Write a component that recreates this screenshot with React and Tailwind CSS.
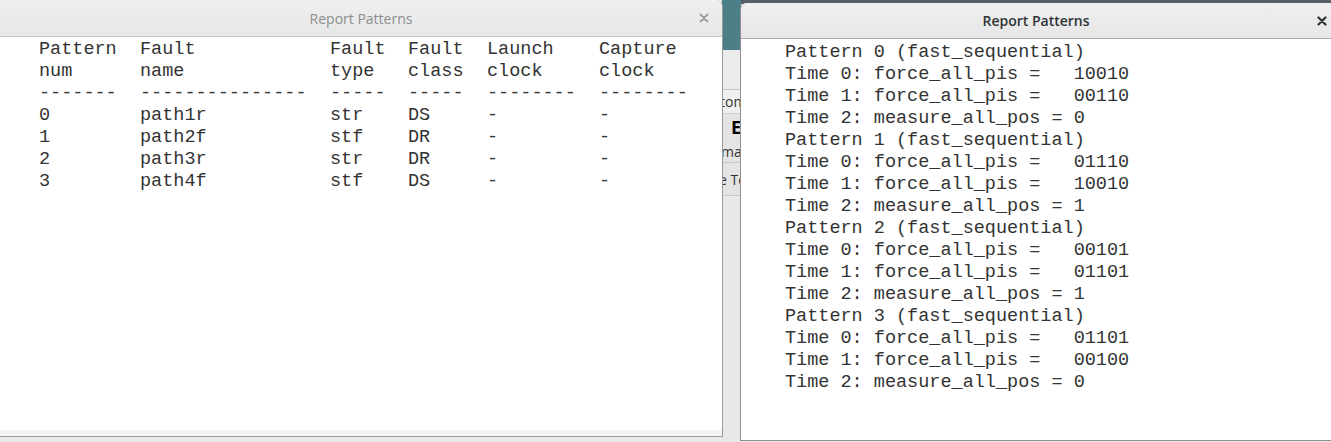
import React from 'react';

const mono = { fontFamily: '"Liberation Mono", "Courier New", monospace' };

const columns = [
  ['Pattern', 'num', '-------'],
  ['Fault', 'name', '---------------'],
  ['Fault', 'type', '-----'],
  ['Fault', 'class', '-----'],
  ['Launch', 'clock', '--------'],
  ['Capture', 'clock', '--------'],
];

const faults = [
  ['0', 'path1r', 'str', 'DS', '-', '-'],
  ['1', 'path2f', 'stf', 'DR', '-', '-'],
  ['2', 'path3r', 'str', 'DR', '-', '-'],
  ['3', 'path4f', 'stf', 'DS', '-', '-'],
];

const patterns = [
  ['10010', '00110', '0'],
  ['01110', '10010', '1'],
  ['00101', '01101', '1'],
  ['01101', '00100', '0'],
];

function CloseIcon({ active }) {
  return (
    <svg width="10" height="10" viewBox="0 0 10 10">
      <path
        d="M1.5 1.5 L8.5 8.5 M8.5 1.5 L1.5 8.5"
        stroke={active ? '#2e3436' : '#8d9091'}
        strokeWidth={active ? 2.2 : 1.7}
        strokeLinecap="round"
      />
    </svg>
  );
}

function TitleBar({ active, height }) {
  return (
    <div
      className={`relative flex items-center justify-center shrink-0 border-b bg-gradient-to-b from-[#efefef] to-[#e7e7e7] ${
        active ? 'border-[#a9a9a9]' : 'border-[#c9c9c9]'
      } ${height}`}
    >
      <span
        className={`text-[14px] ${active ? 'font-semibold text-[#2e3436]' : 'text-[#8b8e8f]'}`}
        style={{ fontFamily: '"Open Sans", "Noto Sans", sans-serif' }}
      >
        Report Patterns
      </span>
      <div className={`absolute top-0 bottom-0 flex items-center ${active ? 'right-[4px]' : 'right-[13px]'}`}>
        <CloseIcon active={active} />
      </div>
    </div>
  );
}

function FaultTable() {
  const grid = 'grid grid-cols-[101px_190px_78px_79px_112px_1fr]';
  return (
    <div className="pl-[39px] pt-[2px] text-[18.5px] leading-[22px] text-[#333333]" style={mono}>
      {[0, 1, 2].map((r) => (
        <div key={r} className={grid}>
          {columns.map((c, i) => (
            <span key={i} className="whitespace-pre">{c[r]}</span>
          ))}
        </div>
      ))}
      {faults.map((row) => (
        <div key={row[0]} className={grid}>
          {row.map((v, i) => (
            <span key={i} className="whitespace-pre">{v}</span>
          ))}
        </div>
      ))}
    </div>
  );
}

function PatternList() {
  return (
    <div className="pl-[44px] pt-[3px] text-[18.5px] leading-[22px] text-[#333333]" style={mono}>
      {patterns.map((p, i) => (
        <div key={i}>
          <div className="whitespace-pre">{`Pattern ${i} (fast_sequential)`}</div>
          <div className="whitespace-pre">{`Time 0: force_all_pis =   ${p[0]}`}</div>
          <div className="whitespace-pre">{`Time 1: force_all_pis =   ${p[1]}`}</div>
          <div className="whitespace-pre">{`Time 2: measure_all_pos = ${p[2]}`}</div>
        </div>
      ))}
    </div>
  );
}

export default function App() {
  const sans = { fontFamily: '"Open Sans", "Noto Sans", sans-serif' };
  return (
    <div className="relative w-[1331px] h-[442px] overflow-hidden bg-[#e9e9e9]">
      {/* desktop top strip */}
      <div className="absolute top-0 left-[723px] right-0 h-[4px] bg-[#56606a]" />

      {/* app behind the windows */}
      <div className="absolute top-0 left-[722px] w-[19px] h-[442px] overflow-hidden flex flex-col bg-[#e4e4e4]" style={sans}>
        <div className="h-[50px] shrink-0 bg-[#4d7f88]" />
        <div className="h-[40px] shrink-0 bg-[#ececec] border-b border-[#c8c8c8]" />
        <div className="h-[24px] shrink-0 flex items-center border-b border-[#cfcfcf] bg-[#f0f0f0] text-[14px] text-[#333] whitespace-nowrap">
          <span className="-ml-[2px]">tom</span>
        </div>
        <div className="h-[26px] shrink-0 flex items-center whitespace-nowrap">
          <span className="ml-[9px] text-[18px] font-bold leading-none text-black">E</span>
        </div>
        <div className="h-[22px] shrink-0 flex items-center text-[14px] text-[#333] whitespace-nowrap">
          <span className="-ml-[1px]">ma</span>
        </div>
        <div className="h-[34px] shrink-0 flex items-center border-t border-b border-[#c8c8c8] text-[14px] text-[#333] whitespace-nowrap">
          <span className="-ml-[3px]">e Te</span>
        </div>
        <div className="flex-1 bg-[#e8e8e8]" />
      </div>

      {/* left window */}
      <div className="absolute top-0 left-0 w-[723px] h-[437px] flex flex-col bg-white border-r border-b border-[#9a9a9a] rounded-tr-[7px] overflow-hidden">
        <TitleBar active={false} height="h-[37px]" />
        <div className="flex-1">
          <FaultTable />
        </div>
        <div className="h-[6px] bg-[#f3f3f3]" />
      </div>

      {/* right window */}
      <div className="absolute top-[3px] left-[740px] w-[591px] h-[438px] flex flex-col bg-white border-l border-b border-[#8f8f8f] rounded-tl-[7px] overflow-hidden">
        <TitleBar active={true} height="h-[36px]" />
        <div className="flex-1">
          <PatternList />
        </div>
      </div>
    </div>
  );
}
